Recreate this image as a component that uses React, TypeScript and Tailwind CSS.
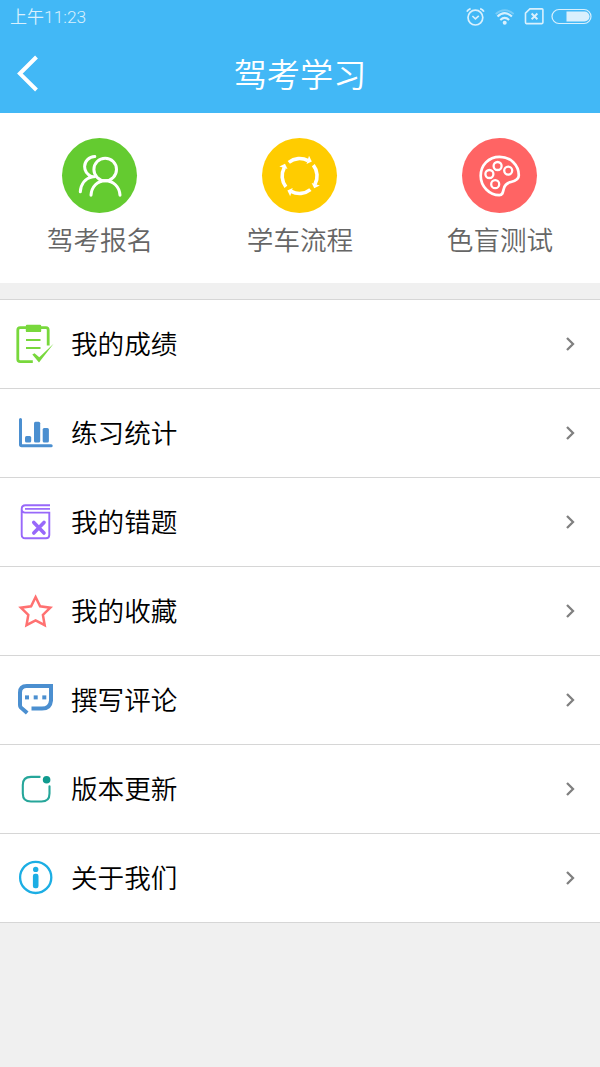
import { FC, ReactNode } from "react";

interface Shortcut {
  label: string;
  color: string;
  icon: ReactNode;
}

interface MenuItem {
  label: string;
  icon: ReactNode;
}

const shortcuts: Shortcut[] = [
  {
    label: "驾考报名",
    color: "bg-[#64cb30]",
    icon: (
      <g fill="none" stroke="#fff" strokeWidth="3" strokeLinecap="round">
        <circle cx="43.2" cy="31.5" r="11.3" />
        <path d="M29 57.2C29.5 48.5 35.5 42.8 43.3 42.8S57.5 48.5 58 57.2" />
        <path d="M32.8 18.6C27 18.8 22.6 23.2 22.6 28.6C22.6 33.5 25.8 37 30 38.8C23.5 40.5 18.8 46 18.3 53.8" />
        <path d="M28 38.8H32" />
      </g>
    ),
  },
  {
    label: "学车流程",
    color: "bg-[#fc0]",
    icon: (
      <g>
        {[0, 90, 180, 270].map((angle) => (
          <g key={angle} transform={`rotate(${angle} 37.6 38)`}>
            <path d="M26.8 24.3A17.4 17.4 0 0 1 46 22.7" fill="none" stroke="#fff" strokeWidth="3.6" />
            <path d="M47 17.8L49.8 23.4L44.5 25.9Z" fill="#fff" />
          </g>
        ))}
      </g>
    ),
  },
  {
    label: "色盲测试",
    color: "bg-[#ff6464]",
    icon: (
      <g fill="none" stroke="#fff" strokeWidth="2.7">
        <path d="M37.5 18.8C26.5 18.8 18.7 27.3 18.7 37.8C18.7 48.6 27.5 57.2 37.3 57.2C40.5 57.2 41 54.5 41.6 51.5C42.4 47.2 45 44.8 49 44C53.5 43.1 56.8 41.7 56.8 37.3C56.8 27 48.5 18.8 37.5 18.8Z" />
        <g strokeWidth="2.3">
          <circle cx="35.6" cy="28" r="4" />
          <circle cx="46.2" cy="32.6" r="4" />
          <circle cx="27.4" cy="36" r="4" />
          <circle cx="33.2" cy="46.2" r="4" />
        </g>
      </g>
    ),
  },
];

const menuItems: MenuItem[] = [
  {
    label: "我的成绩",
    icon: (
      <g fill="none" stroke="#78d83c">
        <path d="M20.8 39.6H8.2Q5.8 39.6 5.8 37.2V8Q5.8 5.6 8.2 5.6H34Q36.2 5.6 36.2 8V23.5" strokeWidth="2.8" />
        <rect x="13.8" y="2.8" width="15.4" height="7.3" rx="1.2" fill="#78d83c" stroke="none" />
        <path d="M14 18.1H28.5M14 26.1H28.5" strokeWidth="2" />
        <path d="M20.3 32.5L22.5 31.2L27.3 35.2L41.6 21.8L27 40.6Z" fill="#78d83c" stroke="none" />
      </g>
    ),
  },
  {
    label: "练习统计",
    icon: (
      <g fill="#4b8fd0">
        <path d="M8.5 8.6V33.6Q8.5 34.7 9.6 34.7H39.2" fill="none" stroke="#4b8fd0" strokeWidth="3" strokeLinecap="round" />
        <rect x="13" y="25" width="6.2" height="6.4" rx="1.5" />
        <rect x="22" y="10.7" width="6.2" height="20.7" rx="1.5" />
        <rect x="30.7" y="17" width="6.2" height="14.4" rx="1.5" />
      </g>
    ),
  },
  {
    label: "我的错题",
    icon: (
      <g fill="none" stroke="#9868fa" strokeWidth="1.9">
        <path d="M38 5.3H13.5C11 5.3 9.7 6.7 9.7 9V34.8Q9.7 38.3 13.2 38.3H34Q37.3 38.3 37.3 35V12.6H13.2Q9.7 12.6 9.7 9.2" />
        <path d="M38 8.9H13" strokeWidth="1.7" />
        <path d="M21.8 22.4L32 33M32 22.4L21.8 33" strokeWidth="3.6" strokeLinecap="round" />
      </g>
    ),
  },
  {
    label: "我的收藏",
    icon: (
      <path
        d="M23.6 8L28.1 17.3L38.3 18.7L30.9 25.9L32.7 36.2L23.6 31.3L14.5 36.2L16.3 25.9L8.9 18.7L19.1 17.3Z"
        fill="none"
        stroke="#ff7171"
        strokeWidth="2.5"
      />
    ),
  },
  {
    label: "撰写评论",
    icon: (
      <g fill="#4b8fd0">
        <path
          d="M15.2 35L8.8 29.4Q8 28.5 8 27V14.5Q8 8 14.8 8H39V22.5Q38.3 30.6 30 30.6H19.5"
          fill="none"
          stroke="#4b8fd0"
          strokeWidth="4"
        />
        <rect x="13" y="17.4" width="4" height="4" />
        <rect x="21.7" y="17.4" width="4" height="4" />
        <rect x="30.3" y="17.4" width="4" height="4" />
      </g>
    ),
  },
  {
    label: "版本更新",
    icon: (
      <g>
        <path
          d="M27.6 9.9H19Q10.8 9.9 10.8 18V26.4Q10.8 34.5 19 34.5H29.4Q37.5 34.5 37.5 26.4V19.3"
          fill="none"
          stroke="#26a69a"
          strokeWidth="2.1"
          strokeLinecap="round"
        />
        <circle cx="34.6" cy="12.7" r="3.8" fill="#109a8e" />
      </g>
    ),
  },
  {
    label: "关于我们",
    icon: (
      <g fill="#1caee4">
        <circle cx="23.7" cy="21.4" r="15.6" fill="none" stroke="#1caee4" strokeWidth="2.3" />
        <circle cx="23.7" cy="13.4" r="2.7" />
        <rect x="20.9" y="17.8" width="5.6" height="14.4" rx="2.2" />
      </g>
    ),
  },
];

const StatusBar: FC = () => {
  return (
    <div className="flex h-[34px] items-center justify-between pl-[10px] pr-2 text-[#d9f0fd]">
      <span className="text-[17px] leading-none font-[350]">
        上午<span className="font-[Roboto,sans-serif] text-[17.4px] font-light">11:23</span>
      </span>
      <div className="flex items-center">
        <svg className="h-5 w-5" viewBox="0 0 20 20" fill="none" stroke="currentColor">
          <circle cx="10.4" cy="10.6" r="7.4" strokeWidth="1.7" />
          <path d="M7.4 9L10.4 11.8L13.8 8.8" strokeWidth="1.6" />
          <path d="M1.9 4.6Q2.9 2.5 5.6 1.6M18.9 4.6Q17.9 2.5 15.2 1.6" strokeWidth="1.8" />
        </svg>
        <svg className="ml-2.5 h-5 w-5" viewBox="0 0 20 20" fill="none" stroke="currentColor">
          <path d="M0.7 7Q9.5 -0.4 18.7 7" strokeWidth="1.8" opacity="0.35" />
          <path d="M2.5 9.6Q9.7 2.8 16.9 9.6" strokeWidth="2.1" />
          <path d="M5.3 12.9Q9.7 8.7 14.1 12.9" strokeWidth="2.1" />
          <circle cx="9.7" cy="15.8" r="2" fill="currentColor" stroke="none" />
        </svg>
        <svg className="ml-[9px] h-5 w-5" viewBox="0 0 20 20" fill="none" stroke="currentColor">
          <path d="M5.9 1.9H18Q18.9 1.9 18.9 2.7V15.6Q18.9 16.6 18 16.6H2.3Q1.5 16.6 1.5 15.6V6.2Z" strokeWidth="1.6" />
          <path d="M7.6 6.5L13.4 12.2M13.4 6.5L7.6 12.2" strokeWidth="1.9" />
        </svg>
        <svg className="ml-[7px] h-5 w-[41px]" viewBox="0 0 41 20" fill="none">
          <rect x="1" y="2.5" width="39" height="14" rx="7" stroke="currentColor" strokeWidth="1.2" />
          <path d="M15.5 4.5H33.5A5 5 0 0 1 33.5 14.6H15.5Z" fill="currentColor" />
        </svg>
      </div>
    </div>
  );
};

const App: FC = () => {
  return (
    <div className="min-h-[1067px] w-[600px] bg-[#f0f0f0] font-['Noto_Sans_CJK_SC',sans-serif]">
      <header className="h-[113px] bg-[#42b8f6]">
        <StatusBar />
        <div className="grid h-[79px] grid-cols-[60px_1fr_60px] items-center text-white">
          <svg className="ml-4 h-10 w-7" viewBox="0 0 28 40" fill="none">
            <path d="M20.5 3L3.9 19.6L20.5 36" stroke="currentColor" strokeWidth="4" />
          </svg>
          <h1 className="pb-0.5 text-center text-[33.2px] font-[350] leading-none">驾考学习</h1>
        </div>
      </header>

      <section className="grid h-[170px] grid-cols-3 bg-white pt-[25px]">
        {shortcuts.map((item) => (
          <div key={item.label} className="flex flex-col items-center">
            <div className={`mr-px h-[75px] w-[75px] rounded-full ${item.color}`}>
              <svg className="h-full w-full" viewBox="0 0 75 75">
                {item.icon}
              </svg>
            </div>
            <span className="mt-1.5 text-[26.6px] leading-10 font-[350] text-[#666]">{item.label}</span>
          </div>
        ))}
      </section>

      <ul className="mt-4 border-t border-[#d6d6d6] bg-white">
        {menuItems.map((item) => (
          <li key={item.label} className="flex h-[89px] items-center border-b border-[#d6d6d6] pl-3 pr-6">
            <svg className="h-11 w-11" viewBox="0 0 44 44">
              {item.icon}
            </svg>
            <span className="ml-[15px] flex-1 pb-0.5 text-[26.6px] leading-10 font-[350] text-black">{item.label}</span>
            <svg className="h-4 w-3" viewBox="0 0 12 16" fill="none">
              <path d="M3 2L9 8L3 14" stroke="#808080" strokeWidth="2.3" />
            </svg>
          </li>
        ))}
      </ul>
    </div>
  );
};

export default App;
